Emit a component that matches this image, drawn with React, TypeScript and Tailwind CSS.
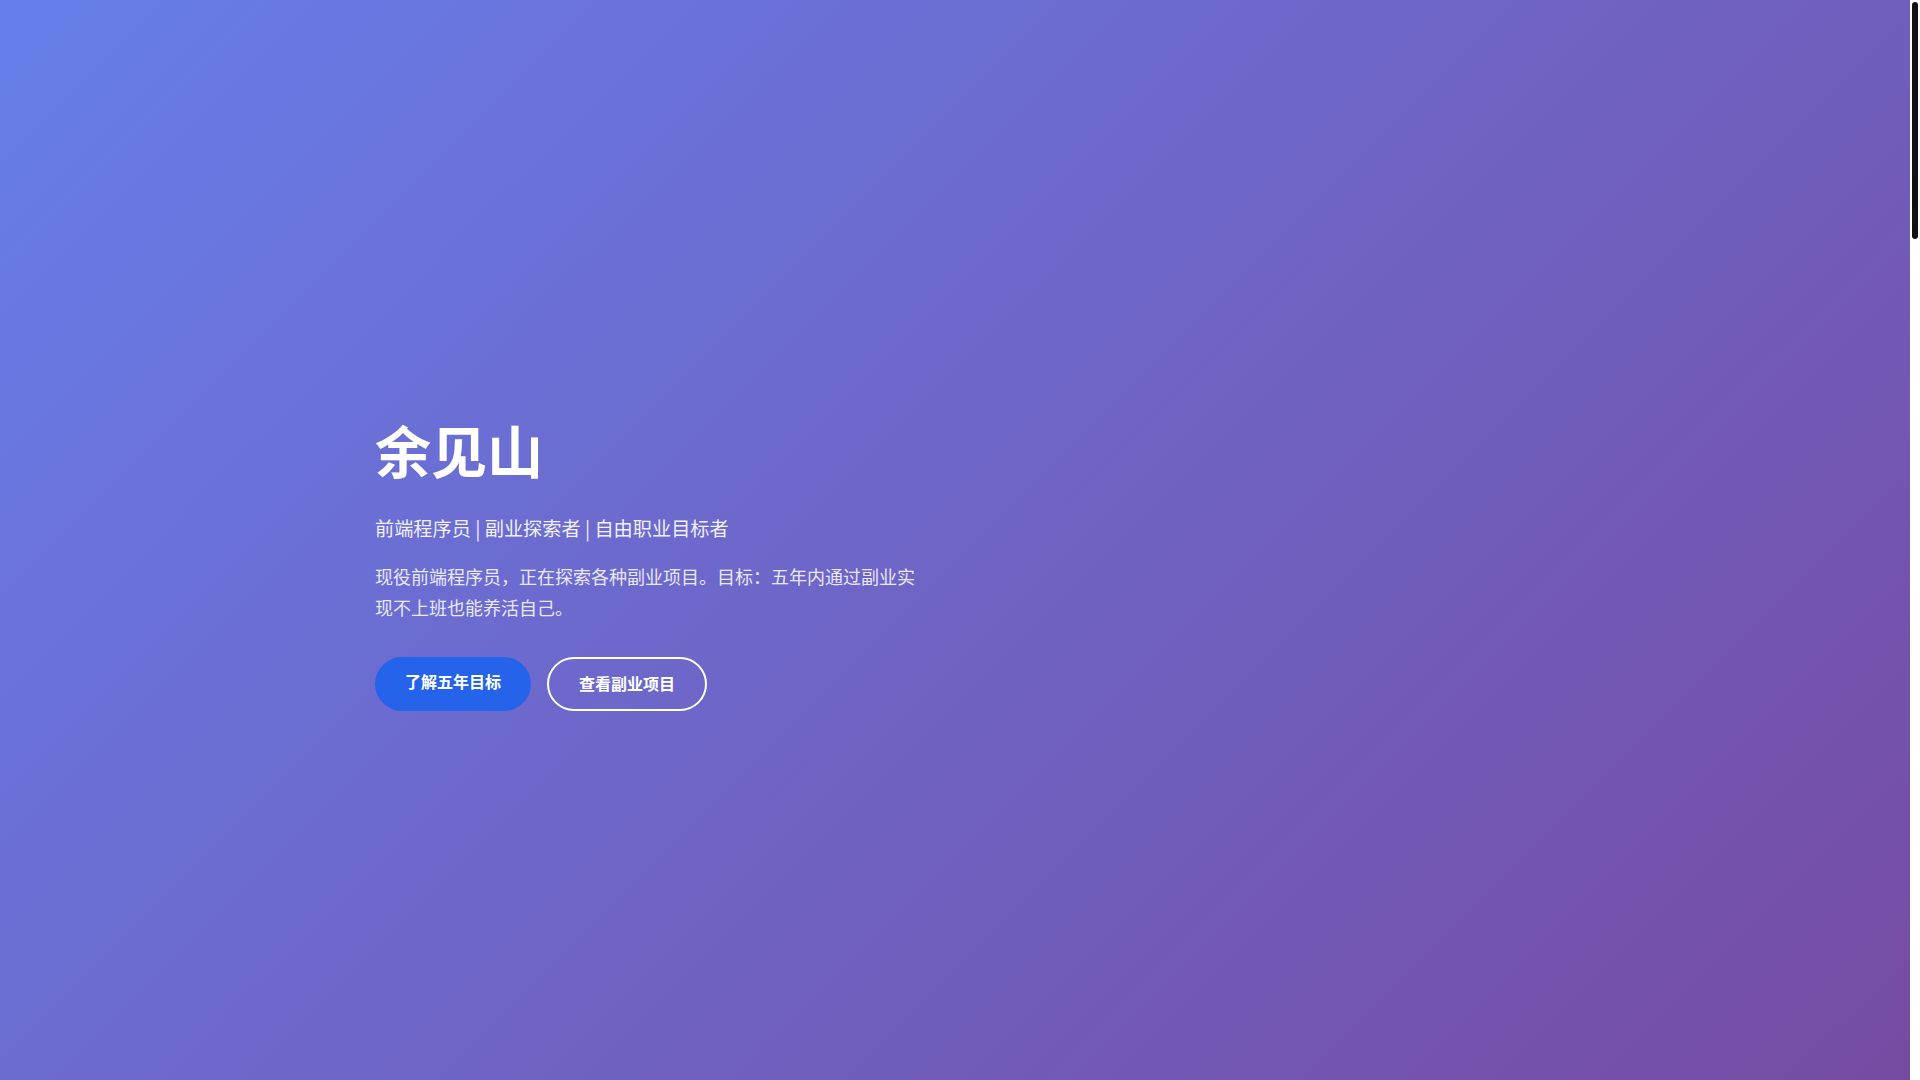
import React from 'react'

const FONT = '"Noto Sans CJK SC", "Noto Sans", sans-serif'

function Hero() {
  return (
    <section className="min-h-screen flex items-center pt-[46px] bg-[linear-gradient(135deg,#667eea_0%,#764ba2_100%)] text-white">
      <div className="w-full max-w-[1200px] mx-auto px-5 grid grid-cols-2 gap-[60px] items-center">
        <div>
          <h1 className="text-[56px] leading-[1.2] font-bold mb-[30px]">余见山</h1>
          <p className="text-[19.2px] leading-[1.6] opacity-90 mb-[18px]">
            前端程序员 | 副业探索者 | 自由职业目标者
          </p>
          <p className="text-[18px] leading-[1.7] opacity-85 mb-[34px]">
            现役前端程序员，正在探索各种副业项目。目标：五年内通过副业实现不上班也能养活自己。
          </p>
          <div className="flex gap-4">
            <a
              href="#goals"
              className="h-[54px] px-[30px] pb-[6px] flex items-center rounded-full bg-[#2563eb] text-white text-base font-bold"
            >
              了解五年目标
            </a>
            <a
              href="#projects"
              className="h-[54px] px-[30px] pb-[1px] flex items-center rounded-full border-2 border-white text-white text-base font-bold"
            >
              查看副业项目
            </a>
          </div>
        </div>
        <div />
      </div>
    </section>
  )
}

// thin page scrollbar as it shows in the screenshot (long page, scrolled to top)
function ScrollTrack() {
  return (
    <div className="w-[10px] h-screen bg-white shrink-0 pt-[2px] px-[2px]">
      <div className="h-[237px] rounded-full bg-[#111]" />
    </div>
  )
}

export default function App() {
  return (
    <div className="flex h-screen overflow-hidden" style={{ fontFamily: FONT }}>
      <main className="flex-1 min-w-0">
        <Hero />
      </main>
      <ScrollTrack />
    </div>
  )
}
